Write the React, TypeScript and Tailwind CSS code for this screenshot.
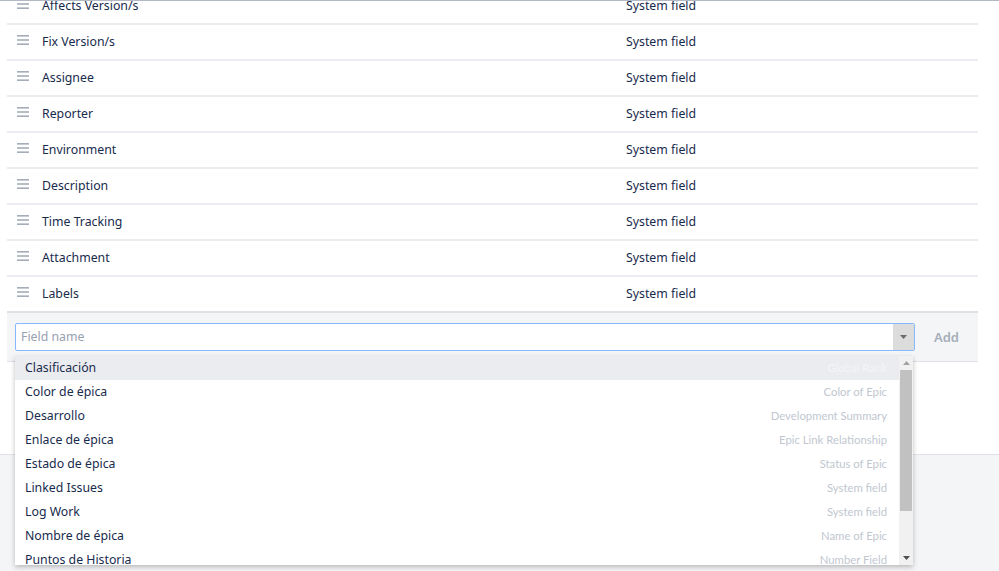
import React from "react";

const rows = [
  "Affects Version/s",
  "Fix Version/s",
  "Assignee",
  "Reporter",
  "Environment",
  "Description",
  "Time Tracking",
  "Attachment",
  "Labels",
];

const options: [string, string][] = [
  ["Clasificación", "Global Rank"],
  ["Color de épica", "Color of Epic"],
  ["Desarrollo", "Development Summary"],
  ["Enlace de épica", "Epic Link Relationship"],
  ["Estado de épica", "Status of Epic"],
  ["Linked Issues", "System field"],
  ["Log Work", "System field"],
  ["Nombre de épica", "Name of Epic"],
  ["Puntos de Historia", "Number Field"],
];

function Grip() {
  return (
    <svg width="12" height="10" viewBox="0 0 12 10" className="shrink-0">
      <rect x="0" y="0" width="12" height="1.6" fill="#a5adba" />
      <rect x="0" y="4.2" width="12" height="1.6" fill="#a5adba" />
      <rect x="0" y="8.4" width="12" height="1.6" fill="#a5adba" />
    </svg>
  );
}

export default function App() {
  return (
    <div
      className="relative w-[999px] h-[571px] overflow-hidden bg-white text-[#172b4d]"
      style={{ fontFamily: '"Noto Sans", "Open Sans", sans-serif' }}
    >
      <div className="relative z-10 h-[1px] bg-[#b3b9c4]" />
      <div className="flex flex-col">
        <div className="w-[971px] ml-[7px] -mt-[12px]">
          {rows.map((r, i) => (
            <div
              key={r}
              className={`flex items-center h-[36px] border-b-2 ${
                i === rows.length - 1 ? "border-[#dfe1e6]" : "border-[#ebecf0]"
              }`}
            >
              <div className="w-[35px] flex pl-[10px] -mt-[5px]">
                <Grip />
              </div>
              <div className="w-[584px] text-[12.3px]">{r}</div>
              <div className="text-[12.3px]">System field</div>
            </div>
          ))}
          <div className="h-[49px] bg-[#f4f5f7] border-b border-[#dfe1e6] flex items-start pt-[10px] pl-[8px]">
            <div className="w-[900px] h-[28px] bg-white border border-[#85b8ff] rounded-[2px] flex items-center">
              <div className="flex-1 pl-[5px] text-[12.3px] text-[#97a0af]">Field name</div>
              <div className="w-[21px] h-[26px] bg-[#dcdcdc] flex items-center justify-center">
                <svg width="7" height="4" viewBox="0 0 7 4">
                  <path d="M0 0 L7 0 L3.5 4 Z" fill="#6b6b6b" />
                </svg>
              </div>
            </div>
            <div className="ml-[19px] mt-[5px] text-[13px] font-semibold text-[#a5adba]">Add</div>
          </div>
        </div>
        <div className="h-[92px]" />
        <div className="h-[200px] bg-[#f4f5f7] border-t border-[#dfe1e6]" />
      </div>

      <div className="absolute left-[15px] top-[356px] w-[898px] h-[209px] bg-white shadow-[0_2px_5px_rgba(0,0,0,0.25)] flex overflow-hidden">
        <div className="flex-1 flex flex-col">
          {options.map(([a, b], i) => (
            <div
              key={a}
              className={`h-[24px] shrink-0 flex items-center justify-between pl-[10px] pr-[12px] ${
                i === 0 ? "bg-[#ebecf0]" : ""
              }`}
            >
              <span className="text-[12.3px] text-[#172b4d]">{a}</span>
              <span
                className={`text-[11.3px] ${i === 0 ? "text-[#f4f5f7]" : "text-[#c1c7d0]"}`}
                style={{ fontFamily: "Lato, sans-serif" }}
              >
                {b}
              </span>
            </div>
          ))}
        </div>
        <div className="w-[14px] bg-[#f1f1f1] flex flex-col items-center">
          <div className="h-[14px] flex items-center justify-center">
            <svg width="7" height="4" viewBox="0 0 7 4">
              <path d="M0 4 L7 4 L3.5 0 Z" fill="#a3a3a3" />
            </svg>
          </div>
          <div className="w-[12px] h-[141px] bg-[#c1c1c1]" />
          <div className="flex-1" />
          <div className="h-[14px] flex items-center justify-center">
            <svg width="7" height="4" viewBox="0 0 7 4">
              <path d="M0 0 L7 0 L3.5 4 Z" fill="#505050" />
            </svg>
          </div>
        </div>
      </div>
    </div>
  );
}
